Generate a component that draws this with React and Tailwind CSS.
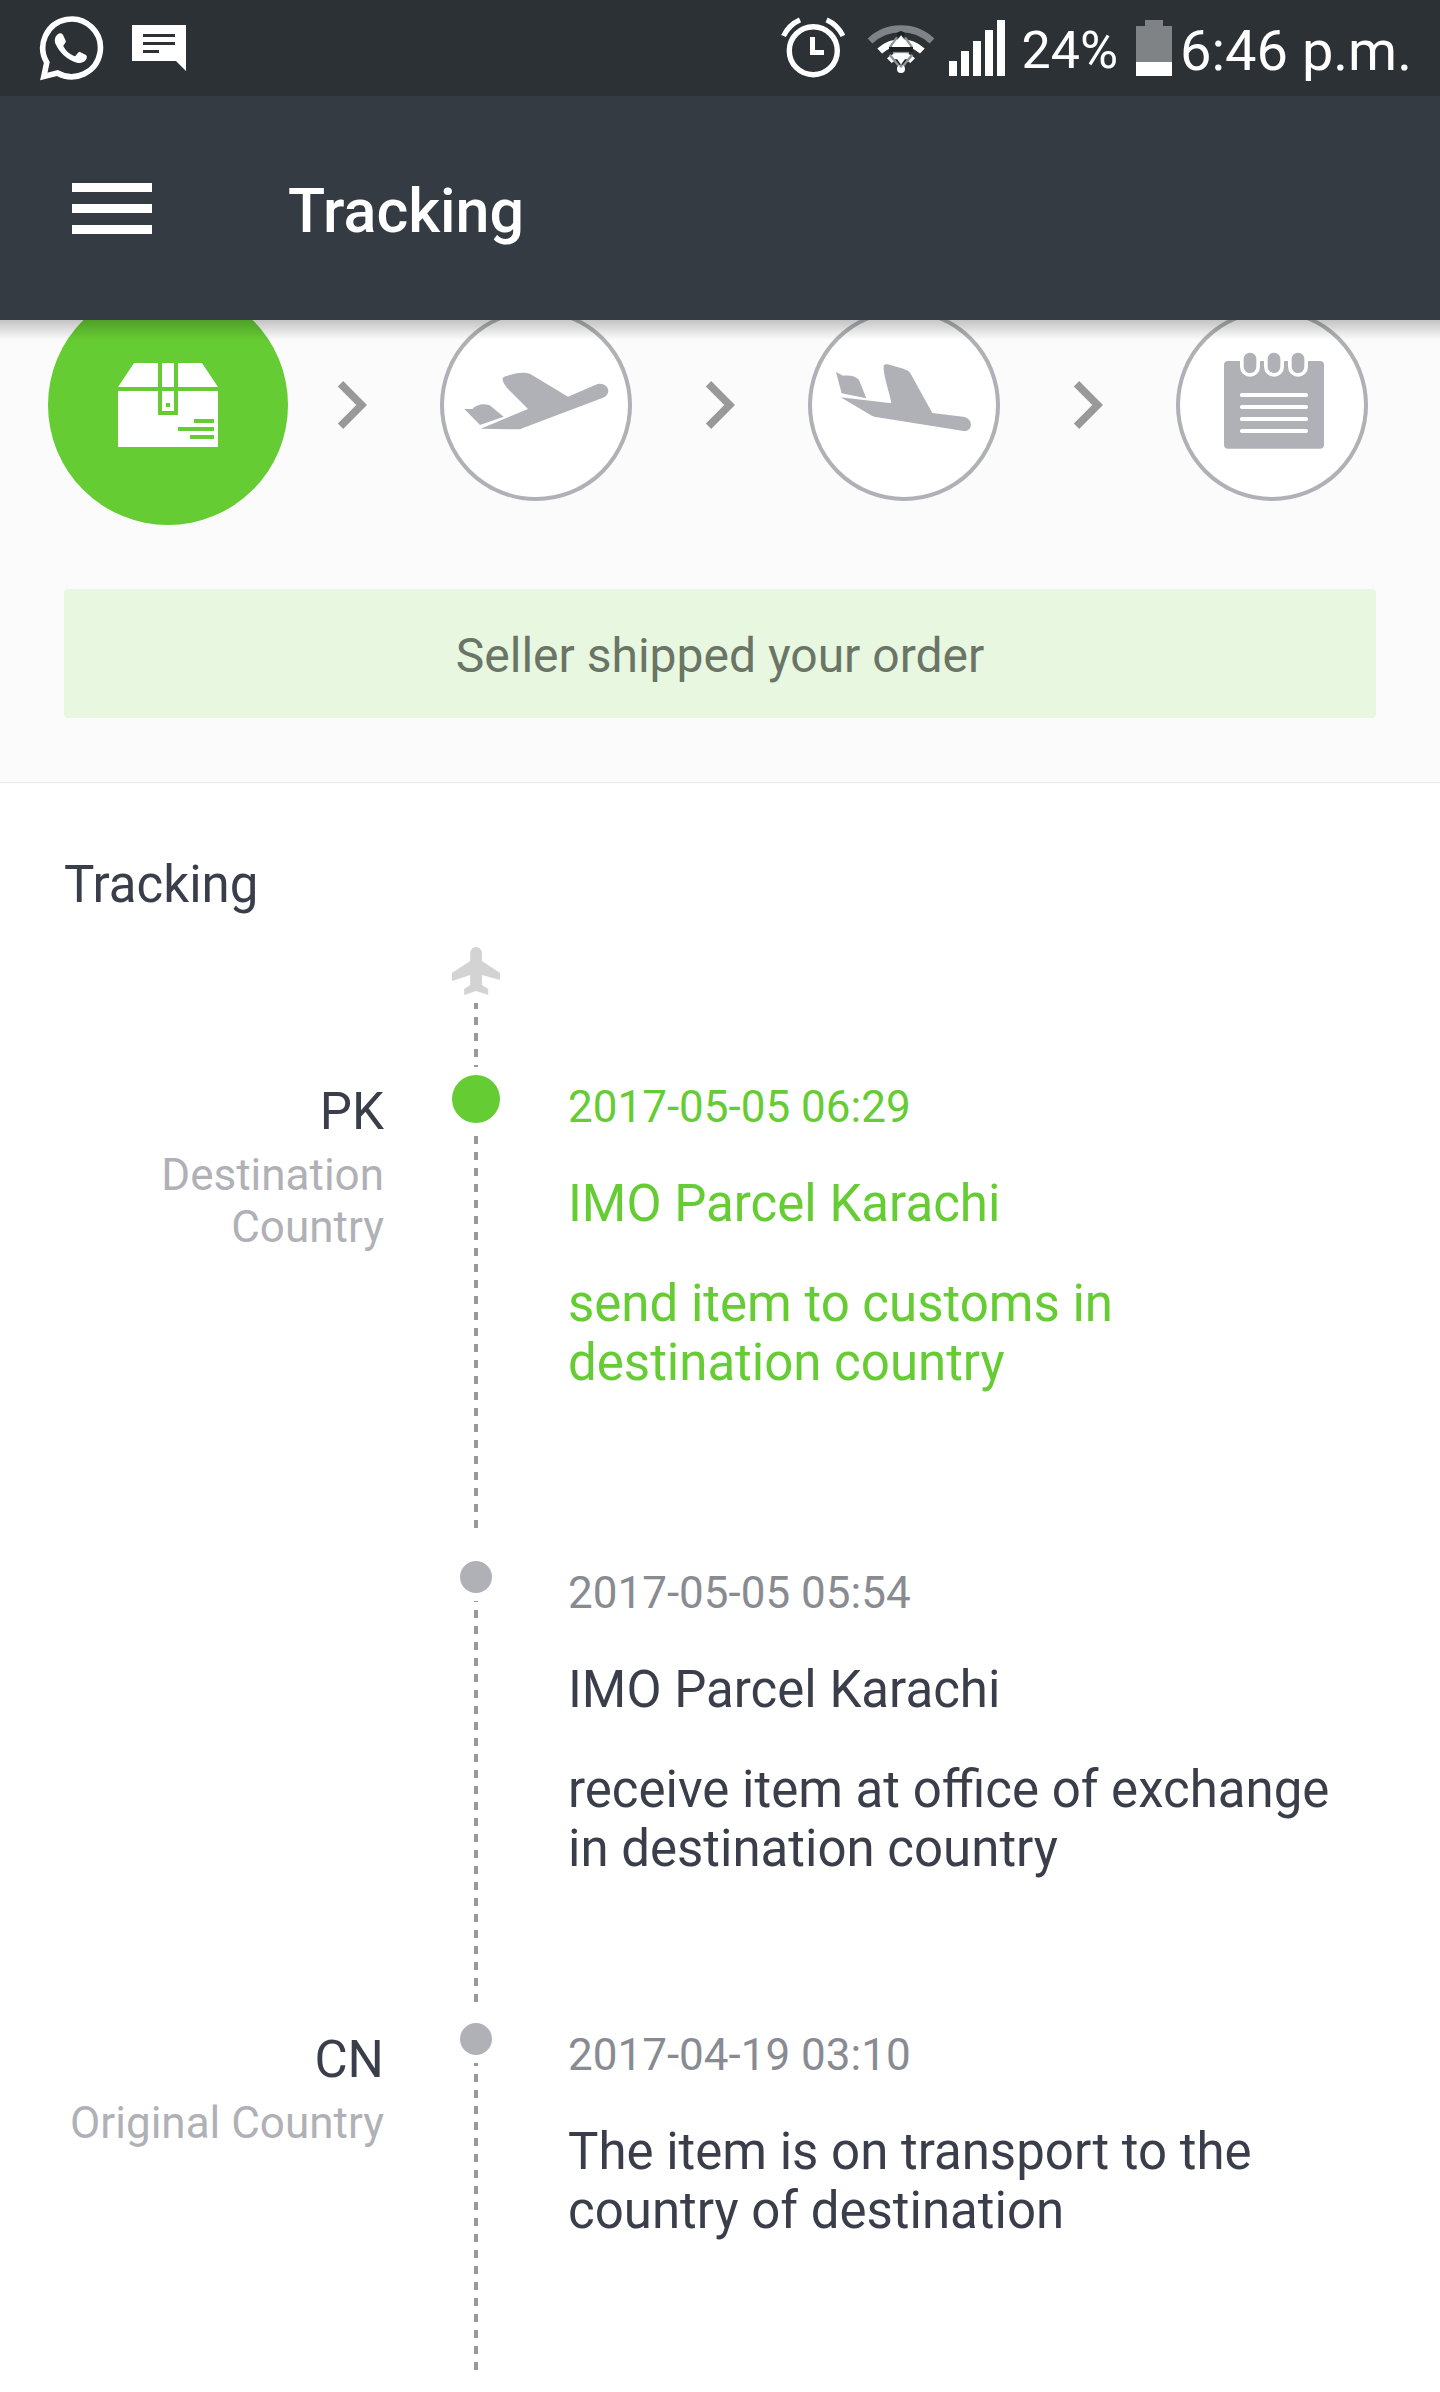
import React from "react";

function WhatsAppIcon() {
  return (
    <svg viewBox="40 15 65 66" className="h-[66px] w-[65px] shrink-0" aria-label="WhatsApp">
      <path d="M58.5 73A28.8 28.8 0 1 0 47.8 62.5L44.8 76.4Z" fill="none" stroke="#fff" strokeWidth="5.6" strokeMiterlimit="8" />
      <path
        d="M60 33.5C62 33 63.5 33.5 64.3 35.5L66.8 41C67.2 42.5 64.5 45 64.3 46C66.5 50.5 70 54 75.5 56.3C77 56.3 78.5 52.5 80.5 51.8L87 55C88.3 56 88 58 87 59.8C85 62.5 81.5 63.5 78 62.7C68 60 60.5 52.5 56.3 43.5C55 39 56.5 35.5 60 33.5Z"
        fill="#fff"
      />
    </svg>
  );
}

function MessageIcon() {
  return (
    <svg viewBox="0 0 54 46" className="h-[46px] w-[54px] shrink-0" aria-label="New message">
      <path d="M0 0H54V46L44 36H0Z" fill="#fff" />
      <path d="M11 9H43V12H11ZM11 17H43V20H11ZM11 25H27V28H11Z" fill="#2c3135" />
    </svg>
  );
}

function AlarmIcon() {
  return (
    <svg viewBox="782 17 64 64" className="h-16 w-16 shrink-0" aria-label="Alarm">
      <circle cx="814.3" cy="51.7" r="24" fill="none" stroke="#fff" strokeWidth="5.4" />
      <path d="M811 38H816V51H825V56H811Z" fill="#fff" />
      <path d="M784.5 37A33.5 33.5 0 0 1 801 20.9M827.6 20.9A33.5 33.5 0 0 1 844 37" fill="none" stroke="#fff" strokeWidth="5.2" />
    </svg>
  );
}

function WifiIcon() {
  return (
    <svg viewBox="290 40 216 156" className="h-[52px] w-[72px] shrink-0" aria-label="Wi-Fi">
      <path d="M305 97A136 136 0 0 1 491 97" fill="none" stroke="#808385" strokeWidth="21" />
      <path d="M334 127A95 95 0 0 1 462 127" fill="none" stroke="#fff" strokeWidth="21" />
      <path d="M363 156A50 50 0 0 1 433 156" fill="none" stroke="#fff" strokeWidth="20" />
      <path d="M384 74L398 66L412 74L404 84H392Z" fill="#1c2124" />
      <path d="M372 152L398 178L424 152Z" fill="#1c2124" />
      <path d="M386 86L366 114M410 86L430 114M364 138L392 172M432 138L404 172M374 131H422" stroke="#909395" strokeWidth="7" />
      <path d="M362 118H434M362 126H434" stroke="#1c2124" strokeWidth="7" />
      <path d="M398 80L426 115H370Z" fill="#fff" />
      <path d="M374 134H422L398 168Z" fill="#fff" />
      <circle cx="398" cy="181" r="12" fill="#fff" />
      <circle cx="398" cy="172" r="5" fill="#909395" />
    </svg>
  );
}

function SignalIcon() {
  return (
    <svg viewBox="0 0 56 56" className="h-14 w-14 shrink-0" aria-label="Signal strength">
      <path d="M0 41H8V56H0ZM12 31H20V56H12ZM24 21H32V56H24ZM36 10H44V56H36ZM48 0H56V56H48Z" fill="#fff" />
    </svg>
  );
}

function BatteryIcon() {
  return (
    <svg viewBox="0 0 36 56" className="h-14 w-9 shrink-0" aria-label="Battery">
      <path d="M9 0H27V6H36V42H0V6H9Z" fill="#808385" />
      <path d="M0 42H36V56H0Z" fill="#fff" />
    </svg>
  );
}

function StatusBar() {
  return (
    <div className="flex h-24 items-center justify-between bg-[#2c3135] pr-7 pl-[39px] text-white">
      <div className="flex items-center gap-7">
        <WhatsAppIcon />
        <MessageIcon />
      </div>
      <div className="flex items-center">
        <AlarmIcon />
        <div className="ml-5">
          <WifiIcon />
        </div>
        <div className="ml-3">
          <SignalIcon />
        </div>
        <span className="ml-4 pt-1.5 text-[52px] leading-[60px]">24%</span>
        <div className="ml-[18px]">
          <BatteryIcon />
        </div>
        <span className="ml-2 pt-1.5 text-[56px] leading-[64px]">6:46 p.m.</span>
      </div>
    </div>
  );
}

function Toolbar() {
  return (
    <header className="flex h-56 items-center bg-[#353b42] pl-[72px] text-white">
      <button type="button" aria-label="Open menu" className="flex w-20 shrink-0 flex-col gap-3">
        <span className="h-[9px] w-full bg-white" />
        <span className="h-[9px] w-full bg-white" />
        <span className="h-[9px] w-full bg-white" />
      </button>
      <h1 className="ml-[136px] pt-1.5 text-[61px] leading-[72px] font-medium">Tracking</h1>
    </header>
  );
}

function ParcelIcon() {
  return (
    <svg viewBox="0 0 100 84" className="h-[84px] w-[100px]" aria-label="Shipped">
      <path d="M16 0H40V24H0ZM44 0H56V24H44ZM60 0H84L100 24H60ZM0 28H40V52H60V28H100V84H0ZM44 28H56V48H44Z" fill="#fff" />
      <path d="M48 40H52V44H48ZM76 56H96V60H76ZM60 64H96V68H60ZM72 72H96V76H72Z" fill="#66cc33" />
    </svg>
  );
}

function TakeoffIcon() {
  return (
    <svg viewBox="72 9 552 552" className="size-full" fill="#b0b1b6" aria-label="Departed">
      <path d="M248 205C250 200 255 199 262 197L290 190C305 187 320 187 331 192L444 260L533 222C548 218 565 228 565 243C564 254 556 261 549 263L303 356C300 358 295 358 290 358L182 356L324 297L262 235C255 225 246 215 248 205Z" />
      <path d="M133 297L157 297C170 283 190 280 209 286L251 320L180 345Z" />
    </svg>
  );
}

function LandingIcon() {
  return (
    <svg viewBox="66 9 552 552" className="size-full" fill="#b0b1b6" aria-label="Arrived">
      <path d="M281 168C282 163 287 162 293 163L335 175C350 180 357 183 362 191L427 309L519 320C533 322 543 331 543 344C542 357 532 364 521 363L253 320C248 319 243 316 238 313L152 262L304 280C298 245 279 195 281 168Z" />
      <path d="M138 186L159 197C180 196 200 199 208 212L229 265L155 250Z" />
    </svg>
  );
}

function NotepadIcon() {
  return (
    <svg viewBox="90 9 552 552" className="size-full" aria-label="Delivered">
      <rect x="222" y="153" width="300" height="263" rx="12" fill="#b0b1b6" />
      {[300, 372, 444].map((x) => (
        <g key={x}>
          <rect x={x - 30} y="118" width="60" height="82" rx="30" fill="#fff" />
          <rect x={x - 19} y="128" width="38" height="61" rx="19" fill="#b0b1b6" />
        </g>
      ))}
      {[249, 285, 321, 357].map((y) => (
        <rect key={y} x="270" y={y} width="204" height="12" rx="5" fill="#fff" />
      ))}
    </svg>
  );
}

function Chevron() {
  return (
    <li aria-hidden="true">
      <svg viewBox="0 0 30 48" className="h-12 w-[30px]">
        <path d="M3.5 2.8L24.7 24L3.5 45.2" fill="none" stroke="#999" strokeWidth="7.6" />
      </svg>
    </li>
  );
}

function Step({ children }) {
  return <li className="size-48 shrink-0 rounded-full border-4 border-[#b0b1b6] bg-white">{children}</li>;
}

function Progress() {
  return (
    <section className="relative border-b border-[#e9e9e9] bg-[#fbfbfb] pb-16">
      <div className="overflow-hidden">
        <ol className="-mt-[35px] flex items-center justify-between px-[72px]">
          <li className="-mx-6 flex size-60 shrink-0 items-center justify-center rounded-full bg-[#66cc33]">
            <ParcelIcon />
          </li>
          <Chevron />
          <Step>
            <TakeoffIcon />
          </Step>
          <Chevron />
          <Step>
            <LandingIcon />
          </Step>
          <Chevron />
          <Step>
            <NotepadIcon />
          </Step>
        </ol>
      </div>
      <div className="absolute inset-x-0 top-0 h-5 bg-linear-to-b from-black/22 to-transparent" />
      <p className="mx-16 mt-16 rounded-sm bg-[#e8f7e0] pt-[35px] pb-[30px] text-center text-[48px] leading-[64px] text-[#6a7566]">
        Seller shipped your order
      </p>
    </section>
  );
}

function PlaneUpIcon() {
  return (
    <svg viewBox="0 0 48 48" className="size-12" fill="#d3d3d3" aria-label="In transit">
      <path d="M18.2 6A5.9 5.9 0 0 1 30 6V14L48 26V33L30 28V38L36.2 42V48L24.1 44L12.2 48V42L18.2 38V28L0 34V26L18.2 14Z" />
    </svg>
  );
}

const dash = "w-1 bg-[linear-gradient(#999_50%,transparent_50%)] bg-[length:4px_16px] bg-repeat-y";

const events = [
  {
    country: "PK",
    role: "Destination Country",
    time: "2017-05-05 06:29",
    lines: ["IMO Parcel Karachi", "send item to customs in destination country"],
    active: true,
    pad: "pb-[169px]",
    rail: "mb-8 bg-[position:0_5px]",
  },
  {
    time: "2017-05-05 05:54",
    lines: ["IMO Parcel Karachi", "receive item at office of exchange in destination country"],
    pad: "pb-[145px]",
    rail: "mb-4 bg-[position:0_-7px]",
  },
  {
    country: "CN",
    role: "Original Country",
    time: "2017-04-19 03:10",
    lines: ["The item is on transport to the country of destination"],
    pad: "pb-[145px]",
    rail: "mb-3 bg-[position:0_-5px]",
  },
];

function Event({ country, role, time, lines, active, pad, rail }) {
  return (
    <li className="grid grid-cols-[320px_184px_1fr]">
      <div className="pt-[7px] text-right">
        {country && (
          <>
            <h3 className="text-[51px] leading-[60px]">{country}</h3>
            <p className="mt-[7px] text-[44px] leading-[52px] text-[#b0b1b6]">{role}</p>
          </>
        )}
      </div>
      <div className="flex flex-col items-center gap-2">
        <span className={active ? "size-12 rounded-full bg-[#66cc33]" : "size-8 rounded-full bg-[#b0b1b6]"} />
        <span className={`flex-1 ${dash} ${rail}`} />
      </div>
      <div className={`flex flex-col gap-[41px] pt-1.5 pr-4 text-[51px] leading-[59px] ${pad} ${active ? "text-[#66cc33]" : ""}`}>
        <time className={`text-[44px] leading-[52px] ${active ? "" : "text-[#898b92]"}`}>{time}</time>
        {lines.map((line) => (
          <p key={line}>{line}</p>
        ))}
      </div>
    </li>
  );
}

function Timeline() {
  return (
    <section className="px-16 pt-[72px]">
      <h2 className="text-[51px] leading-[60px]">Tracking</h2>
      <div className="mt-8 grid grid-cols-[320px_184px_1fr]">
        <div className="col-start-2 flex flex-col items-center gap-2 pb-2">
          <PlaneUpIcon />
          <span className={`h-16 ${dash} bg-[position:0_-2px]`} />
        </div>
      </div>
      <ol>
        {events.map((event) => (
          <Event key={event.time} {...event} />
        ))}
      </ol>
    </section>
  );
}

export default function App() {
  return (
    <main className="min-h-screen bg-white font-[Roboto,sans-serif] text-[#3a3e4a]">
      <StatusBar />
      <Toolbar />
      <Progress />
      <Timeline />
    </main>
  );
}
